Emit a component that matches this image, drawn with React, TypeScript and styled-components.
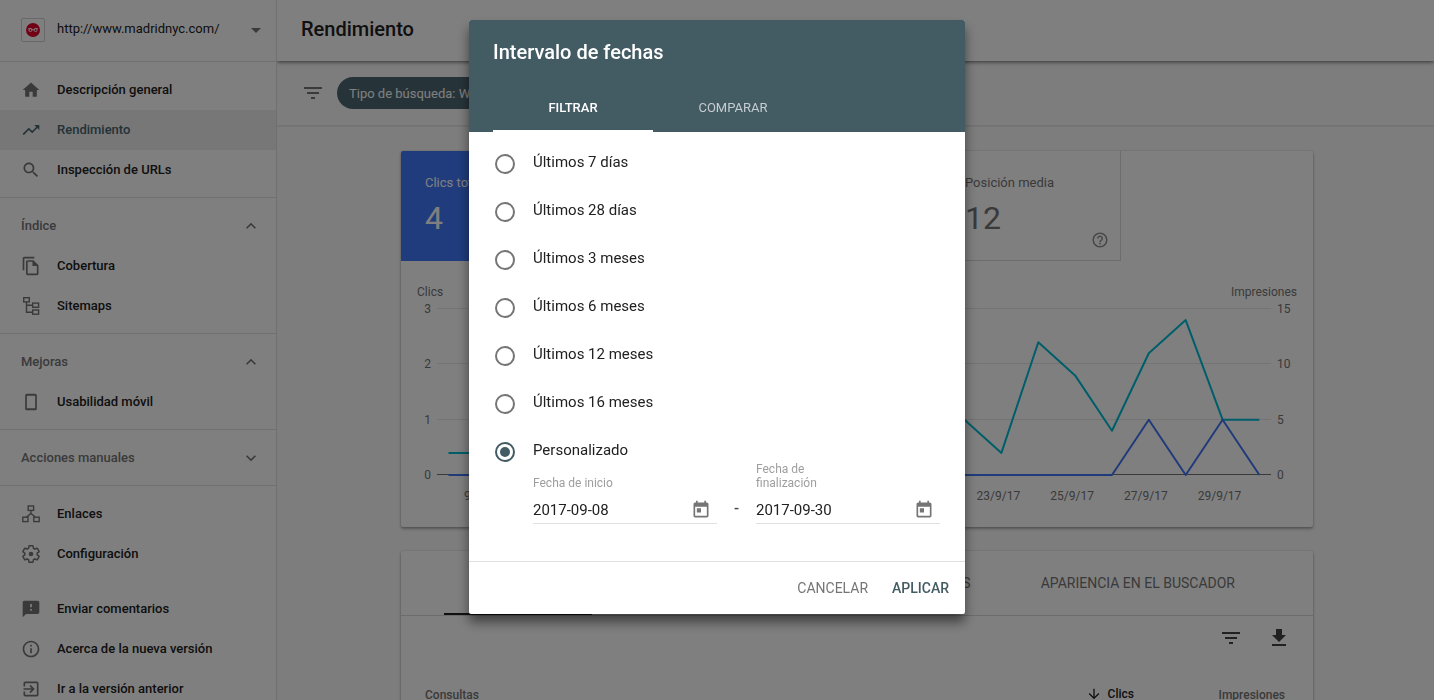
import React from "react";
import styled, { createGlobalStyle, css } from "styled-components";

const Global = createGlobalStyle`
  *, *::before, *::after { box-sizing: border-box; }
  body {
    margin: 0;
    overflow: hidden;
    background: #fafafa;
    color: #212121;
    font-family: Roboto, "Liberation Sans", sans-serif;
    font-size: 14px;
  }
  button, input { font: inherit; color: inherit; }
  button { margin: 0; padding: 0; border: 0; background: none; cursor: pointer; }
  h1, h2, p { margin: 0; font-weight: 500; }
`;

/* ---------- icons ---------- */

const Svg = styled.svg<{ $size: number }>`
  display: block;
  flex: none;
  width: ${(p) => p.$size}px;
  height: ${(p) => p.$size}px;
  fill: currentColor;
`;

const paths = {
  home: "M10 20v-6h4v6h5v-8h3L12 3 2 12h3v8z",
  trend: "M16 6l2.29 2.29-4.88 4.88-4-4L2 16.59 3.41 18l6-6 4 4 6.3-6.29L22 12V6z",
  search:
    "M15.5 14h-.79l-.28-.27C15.41 12.59 16 11.11 16 9.5 16 5.91 13.09 3 9.5 3S3 5.91 3 9.5 5.91 16 9.5 16c1.61 0 3.09-.59 4.23-1.57l.27.28v.79l5 4.99L20.49 19l-4.99-5zm-6 0C7.01 14 5 11.99 5 9.5S7.01 5 9.5 5 14 7.01 14 9.5 11.99 14 9.5 14z",
  copy: "M16 1H4c-1.1 0-2 .9-2 2v14h2V3h12V1zm-1 4H8c-1.1 0-1.99.9-1.99 2L6 21c0 1.1.89 2 1.99 2H19c1.1 0 2-.9 2-2V11l-6-6zM8 21V7h6v5h5v9H8z",
  phone:
    "M17 2H7c-1.1 0-2 .9-2 2v16c0 1.1.9 2 2 2h10c1.1 0 2-.9 2-2V4c0-1.1-.9-2-2-2zm0 17.5H7v-15h10v15z",
  feedback:
    "M20 2H4c-1.1 0-1.99.9-1.99 2L2 22l4-4h14c1.1 0 2-.9 2-2V4c0-1.1-.9-2-2-2zm-7 12h-2v-2h2v2zm0-4h-2V6h2v4z",
  info: "M11 17h2v-6h-2v6zm1-15C6.48 2 2 6.48 2 12s4.48 10 10 10 10-4.48 10-10S17.52 2 12 2zm0 18c-4.41 0-8-3.59-8-8s3.59-8 8-8 8 3.59 8 8-3.59 8-8 8zM11 9h2V7h-2v2z",
  exit: "M10.09 15.59L11.5 17l5-5-5-5-1.41 1.41L12.67 11H3v2h9.67l-2.58 2.59zM19 3H5c-1.11 0-2 .9-2 2v4h2V5h14v14H5v-4H3v4c0 1.1.89 2 2 2h14c1.1 0 2-.9 2-2V5c0-1.1-.9-2-2-2z",
  help: "M11 18h2v-2h-2v2zm1-16C6.48 2 2 6.48 2 12s4.48 10 10 10 10-4.48 10-10S17.52 2 12 2zm0 18c-4.41 0-8-3.59-8-8s3.59-8 8-8 8 3.59 8 8-3.59 8-8 8zm0-14c-2.21 0-4 1.79-4 4h2c0-1.1.9-2 2-2s2 .9 2 2c0 2-3 1.75-3 5h2c0-2.25 3-2.5 3-5 0-2.21-1.79-4-4-4z",
  arrowDown: "M20 12l-1.41-1.41L13 16.17V4h-2v12.17l-5.58-5.59L4 12l8 8 8-8z",
  filter: "M10 18h4v-2h-4v2zM3 6v2h18V6H3zm3 7h12v-2H6v2z",
  download: "M19 9h-4V3H9v6H5l7 7 7-7zM5 18v2h14v-2H5z",
  less: "M12 8l-6 6 1.41 1.41L12 10.83l4.59 4.58L18 14z",
  more: "M16.59 8.59L12 13.17 7.41 8.59 6 10l6 6 6-6z",
  drop: "M7 10l5 5 5-5z",
  today:
    "M19 3h-1V1h-2v2H8V1H6v2H5c-1.11 0-1.99.9-1.99 2L3 19c0 1.1.89 2 2 2h14c1.1 0 2-.9 2-2V5c0-1.1-.9-2-2-2zm0 16H5V8h14v11zM7 10h5v5H7z",
};

type IconName = keyof typeof paths | "sitemap" | "links" | "gear";

function Icon({ name, size = 20 }: { name: IconName; size?: number }) {
  if (name === "sitemap") {
    return (
      <Svg $size={size} viewBox="0 0 20 20" aria-hidden="true">
        <g fill="none" stroke="currentColor" strokeWidth="1.4">
          <rect x="2.7" y="1.7" width="5.6" height="4.2" />
          <rect x="11.7" y="7.1" width="5.9" height="4.2" />
          <rect x="11.7" y="14" width="5.9" height="4.2" />
          <path d="M5.5 6v10.2h6.2M5.5 9.3h6.2" />
        </g>
      </Svg>
    );
  }
  if (name === "links") {
    return (
      <Svg $size={size} viewBox="0 0 20 20" aria-hidden="true">
        <g fill="none" stroke="currentColor" strokeWidth="1.4">
          <rect x="7.2" y="2" width="5.4" height="4.4" />
          <rect x="1.8" y="13.2" width="5.2" height="4.4" />
          <rect x="12.8" y="13.2" width="5.4" height="4.4" />
          <path d="M9.9 6.4v3.4M5.4 13.2l4.5-3.8 4.6 3.8" />
        </g>
      </Svg>
    );
  }
  if (name === "gear") {
    return (
      <Svg $size={size} viewBox="0 0 24 24" aria-hidden="true">
        <path
          fill="none"
          stroke="currentColor"
          strokeWidth="1.8"
          d="M19.43 12.98c.04-.32.07-.64.07-.98s-.03-.66-.07-.98l2.11-1.65c.19-.15.24-.42.12-.64l-2-3.46c-.12-.22-.39-.3-.61-.22l-2.49 1c-.52-.4-1.08-.73-1.69-.98l-.38-2.65C14.46 2.18 14.25 2 14 2h-4c-.25 0-.46.18-.49.42l-.38 2.65c-.61.25-1.17.59-1.69.98l-2.49-1c-.23-.09-.49 0-.61.22l-2 3.46c-.13.22-.07.49.12.64l2.11 1.65c-.04.32-.07.65-.07.98s.03.66.07.98l-2.11 1.65c-.19.15-.24.42-.12.64l2 3.46c.12.22.39.3.61.22l2.49-1c.52.4 1.08.73 1.69.98l.38 2.65c.03.24.24.42.49.42h4c.25 0 .46-.18.49-.42l.38-2.65c.61-.25 1.17-.59 1.69-.98l2.49 1c.23.09.49 0 .61-.22l2-3.46c.12-.22.07-.49-.12-.64l-2.11-1.65z"
        />
        <circle cx="12" cy="12" r="2.8" />
      </Svg>
    );
  }
  return (
    <Svg $size={size} viewBox="0 0 24 24" aria-hidden="true">
      <path d={paths[name]} />
      {name === "copy" && <path d="M14 6v6h6z" />}
    </Svg>
  );
}

/* ---------- page shell ---------- */

const Page = styled.div`
  display: grid;
  grid-template-columns: 277px minmax(0, 1fr);
  height: 100vh;
  overflow: hidden;
`;

const Sidebar = styled.aside`
  border-right: 1px solid #e0e0e0;
  background: #fff;
  overflow: hidden;
`;

const Property = styled.button`
  display: flex;
  align-items: center;
  width: 100%;
  height: 62px;
  padding: 0 8px 2px 21px;
  border-bottom: 1px solid #e0e0e0;
  font-size: 13px;
  text-align: left;
  color: #212121;
`;

const Favicon = styled.span`
  display: grid;
  place-items: center;
  width: 24px;
  height: 24px;
  margin-right: 12px;
  border: 1px solid #d0d0d0;
  border-radius: 2px;
`;

const PropertyName = styled.span`
  flex: 1;
  padding-bottom: 2px;
`;

const Muted = styled.span`
  display: flex;
  color: #757575;
`;

const NavSection = styled.div<{ $line?: boolean }>`
  padding: 8px 0 7px;
  ${(p) => p.$line && css`border-bottom: 1px solid #e0e0e0;`}
`;

const NavLink = styled.a<{ $active?: boolean }>`
  display: flex;
  align-items: center;
  gap: 16px;
  height: 40px;
  padding-left: 21px;
  font-size: 13px;
  font-weight: 500;
  text-decoration: none;
  color: ${(p) => (p.$active ? "#47646f" : "#212121")};
  background: ${(p) => (p.$active ? "#eeeeee" : "transparent")};
  svg { color: ${(p) => (p.$active ? "#47646f" : "#757575")}; }
`;

const NavText = styled.span`
  padding-bottom: 2px;
`;

const GroupButton = styled.button`
  display: flex;
  align-items: center;
  justify-content: space-between;
  width: 100%;
  height: 40px;
  padding: 0 15px 0 21px;
  font-size: 13px;
  font-weight: 500;
  color: #757575;
`;

const Main = styled.main`
  display: flex;
  flex-direction: column;
  min-width: 0;
  overflow: hidden;
`;

const TopBar = styled.header`
  display: flex;
  flex: none;
  align-items: center;
  height: 61px;
  padding: 0 24px 4px;
  background: #fff;
  box-shadow: 0 1px 4px rgba(0, 0, 0, 0.6);
  z-index: 1;
`;

const PageTitle = styled.h1`
  font-size: 20px;
  line-height: 28px;
`;

const FilterBar = styled.div`
  display: flex;
  flex: none;
  align-items: center;
  gap: 12px;
  height: 66px;
  padding: 0 24px;
  border-bottom: 2px solid #e8e8e8;
`;

const IconButton = styled.button`
  display: flex;
  color: #757575;
`;

const Chip = styled.button`
  height: 32px;
  padding: 0 12px;
  border-radius: 16px;
  background: #4d6873;
  color: #fff;
  font-size: 13px;
`;

const Content = styled.div`
  display: flex;
  flex: none;
  flex-direction: column;
  gap: 24px;
  padding: 24px 121px 24px 124px;
`;

const Card = styled.section`
  border-radius: 2px;
  background: #fff;
  box-shadow: 0 2px 3px rgba(0, 0, 0, 0.3), 0 0 2px rgba(0, 0, 0, 0.2);
  overflow: hidden;
`;

/* ---------- score cards ---------- */

const Scores = styled.div`
  display: grid;
  grid-template-columns: repeat(4, 180px);
`;

const Score = styled.div<{ $fill?: string }>`
  display: flex;
  flex-direction: column;
  height: 110px;
  padding: 22px 11px 0 24px;
  background: ${(p) => p.$fill ?? "transparent"};
  color: ${(p) => (p.$fill ? "#fff" : "#757575")};
  ${(p) =>
    !p.$fill &&
    css`
      border-right: 1px solid #d8d8d8;
      border-bottom: 1px solid #d8d8d8;
    `}
`;

const ScoreLabel = styled.span`
  font-size: 13px;
  line-height: 20px;
`;

const ScoreValue = styled.span`
  margin-top: 5px;
  font-size: 32px;
  line-height: 40px;
`;

const ScoreHelp = styled.button`
  display: flex;
  align-self: flex-end;
  margin-top: -7px;
  opacity: 0.8;
`;

/* ---------- chart ---------- */

const ChartSvg = styled.svg`
  display: block;
  width: 100%;
  height: auto;
  font-size: 12px;
  fill: #757575;
`;

const impressions = [2, 2, 4, 3, 5, 4, 6, 3, 5, 7, 4, 6, 8, 4, 5, 2, 12, 9, 4, 11, 14, 5, 5];
const clicks = [0, 0, 0, 0, 0, 0, 0, 0, 0, 0, 0, 0, 0, 0, 0, 0, 0, 0, 0, 1, 0, 1, 0];
const BASE = 214;
const HEIGHT = 166;
const px = (i: number) => 47.5 + i * 36.86;
const line = (values: number[], max: number) =>
  values.map((v, i) => `${px(i).toFixed(1)},${(BASE - (v / max) * HEIGHT).toFixed(1)}`).join(" ");

function Chart() {
  return (
    <ChartSvg viewBox="0 0 912 266" role="img" aria-label="Clics e impresiones por día">
      <text x="16" y="35">Clics</text>
      <text x="896" y="35" textAnchor="end">Impresiones</text>
      {[0, 1, 2, 3].map((v) => {
        const y = Math.round(BASE - (v / 3) * HEIGHT) - 0.5;
        return (
          <g key={v}>
            <path d={`M36 ${y}H870`} stroke={v === 0 ? "#757575" : "#e8e8e8"} />
            <text x="30" y={y + 4} textAnchor="end">{v}</text>
            <text x="876" y={y + 4}>{v * 5}</text>
          </g>
        );
      })}
      {impressions.map((_, i) =>
        i % 2 === 1 ? (
          <text key={i} x={px(i) - 3} y="239" textAnchor="middle">{`${8 + i}/9/17`}</text>
        ) : null
      )}
      <g fill="none" strokeWidth="2" strokeLinejoin="round">
        <polyline points={line(impressions, 15)} stroke="#00bcd4" />
        <polyline points={line(clicks, 3)} stroke="#4274f4" />
      </g>
    </ChartSvg>
  );
}

/* ---------- table card ---------- */

const DataTabs = styled.div`
  display: flex;
  justify-content: flex-end;
  gap: 16px;
  height: 65px;
  padding: 0 54px 0 43px;
  border-bottom: 1px solid #d8d8d8;
`;

const DataTab = styled.button<{ $active?: boolean }>`
  padding: 2px 24px 0;
  font-size: 14px;
  white-space: nowrap;
  color: ${(p) => (p.$active ? "#212121" : "#757575")};
  border-bottom: 2px solid ${(p) => (p.$active ? "#212121" : "transparent")};
  &:first-child {
    min-width: 148px;
    margin-right: auto;
  }
  &:last-child { margin-left: 6px; }
`;

const Toolbar = styled.div`
  display: flex;
  justify-content: flex-end;
  gap: 24px;
  padding: 10px 22px;
  ${IconButton} { color: #424242; }
`;

const DataTable = styled.table`
  width: 100%;
  border-collapse: collapse;
  font-size: 12px;
  th {
    height: 70px;
    padding: 0;
    font-weight: 500;
    text-align: right;
    color: #757575;
  }
  th:first-child { padding-left: 24px; text-align: left; }
  th:last-child { width: 179px; padding-right: 28px; }
`;

const SortHead = styled.button`
  display: inline-flex;
  align-items: center;
  gap: 6px;
  font-weight: 500;
  color: #212121;
`;

/* ---------- dialog ---------- */

const Scrim = styled.div`
  position: fixed;
  inset: 0;
  z-index: 10;
  display: flex;
  justify-content: center;
  align-items: flex-start;
  padding: 20px;
  background: rgba(0, 0, 0, 0.5);
`;

const Dialog = styled.form`
  width: 496px;
  border-radius: 2px;
  background: #fff;
  overflow: hidden;
  box-shadow: 0 8px 12px rgba(0, 0, 0, 0.5);
`;

const DialogHead = styled.div`
  height: 112px;
  padding: 16px 24px 0;
  background: #435b63;
  color: #fff;
`;

const DialogTitle = styled.h2`
  font-size: 20px;
  line-height: 32px;
`;

const DialogTabs = styled.div`
  display: flex;
  margin-top: 16px;
`;

const DialogTab = styled.button<{ $active?: boolean }>`
  width: 160px;
  height: 48px;
  border-bottom: 2px solid ${(p) => (p.$active ? "#fff" : "transparent")};
  font-size: 13px;
  font-weight: ${(p) => (p.$active ? 500 : 400)};
  color: ${(p) => (p.$active ? "#fff" : "#c7cdd1")};
`;

const DialogBody = styled.div`
  padding: 6px 25px 37px 26px;
`;

const Option = styled.label`
  display: flex;
  gap: 18px;
  height: 48px;
  font-size: 15px;
  line-height: 48px;
`;

const Radio = styled.input`
  appearance: none;
  flex: none;
  display: grid;
  place-items: center;
  width: 20px;
  height: 20px;
  margin: 16px 0 0;
  border: 2px solid #757575;
  border-radius: 50%;
  &:checked { border-color: #435b63; }
  &:checked::before {
    content: "";
    width: 10px;
    height: 10px;
    border-radius: 50%;
    background: #435b63;
  }
`;

const Dates = styled.div`
  display: flex;
  align-items: flex-end;
  justify-content: space-between;
  margin: -12px 0 0 38px;
`;

const DateField = styled.label`
  width: 184px;
  font-size: 12px;
  line-height: 14px;
  color: #9e9e9e;
`;

const DateCaption = styled.span`
  display: block;
  max-width: 90px;
`;

const DateLine = styled.span`
  display: flex;
  align-items: center;
  margin-top: 6px;
  padding-right: 6px;
  border-bottom: 1px solid #e0e0e0;
  color: #757575;
`;

const DateInput = styled.input`
  flex: 1;
  min-width: 0;
  height: 27px;
  padding: 0;
  border: 0;
  outline: 0;
  background: none;
  font-size: 15px;
  color: #212121;
`;

const Dash = styled.span`
  font-size: 15px;
  font-weight: 500;
  line-height: 32px;
  color: #424242;
`;

const DialogFoot = styled.div`
  display: flex;
  align-items: center;
  justify-content: flex-end;
  gap: 24px;
  height: 53px;
  padding-right: 16px;
  border-top: 1px solid #e0e0e0;
`;

const TextButton = styled.button<{ $primary?: boolean }>`
  font-size: 14px;
  font-weight: ${(p) => (p.$primary ? 500 : 400)};
  color: ${(p) => (p.$primary ? "#435b63" : "#757575")};
`;

const options = [
  "Últimos 7 días",
  "Últimos 28 días",
  "Últimos 3 meses",
  "Últimos 6 meses",
  "Últimos 12 meses",
  "Últimos 16 meses",
  "Personalizado",
];

const scores = [
  { label: "Clics totales", value: "4", fill: "#4279fb" },
  { label: "Impresiones totales", value: "125", fill: "#00bcd4" },
  { label: "CTR medio", value: "3,2%" },
  { label: "Posición media", value: "12" },
];

function NavItem({ icon, text, active }: { icon: IconName; text: string; active?: boolean }) {
  return (
    <NavLink href="#" $active={active}>
      <Icon name={icon} />
      <NavText>{text}</NavText>
    </NavLink>
  );
}

function Group({ text, open }: { text: string; open?: boolean }) {
  return (
    <GroupButton type="button" aria-expanded={!!open}>
      <NavText>{text}</NavText>
      <Icon name={open ? "less" : "more"} />
    </GroupButton>
  );
}

function DateBox({ caption, value }: { caption: string; value: string }) {
  return (
    <DateField>
      <DateCaption>{caption}</DateCaption>
      <DateLine>
        <DateInput type="text" defaultValue={value} />
        <Icon name="today" />
      </DateLine>
    </DateField>
  );
}

export default function App() {
  return (
    <>
      <Global />
      <Page>
        <Sidebar>
          <Property type="button">
            <Favicon>
              <Svg $size={14} viewBox="0 0 14 14" aria-hidden="true">
                <circle cx="7" cy="7" r="7" fill="#e4002b" />
                <g fill="none" stroke="#fff" strokeWidth="0.9">
                  <circle cx="4.4" cy="7.1" r="1.5" />
                  <circle cx="9.6" cy="7.1" r="1.5" />
                  <path d="M2.2 5.6h2.6L7 7l2.2-1.4h2.6" />
                </g>
              </Svg>
            </Favicon>
            <PropertyName>http://www.madridnyc.com/</PropertyName>
            <Muted><Icon name="drop" size={24} /></Muted>
          </Property>
          <nav>
            <NavSection $line>
              <NavItem icon="home" text="Descripción general" />
              <NavItem icon="trend" text="Rendimiento" active />
              <NavItem icon="search" text="Inspección de URLs" />
            </NavSection>
            <NavSection $line>
              <Group text="Índice" open />
              <NavItem icon="copy" text="Cobertura" />
              <NavItem icon="sitemap" text="Sitemaps" />
            </NavSection>
            <NavSection $line>
              <Group text="Mejoras" open />
              <NavItem icon="phone" text="Usabilidad móvil" />
            </NavSection>
            <NavSection $line>
              <Group text="Acciones manuales" />
            </NavSection>
            <NavSection>
              <NavItem icon="links" text="Enlaces" />
              <NavItem icon="gear" text="Configuración" />
            </NavSection>
            <NavSection>
              <NavItem icon="feedback" text="Enviar comentarios" />
              <NavItem icon="info" text="Acerca de la nueva versión" />
              <NavItem icon="exit" text="Ir a la versión anterior" />
            </NavSection>
          </nav>
        </Sidebar>

        <Main>
          <TopBar>
            <PageTitle>Rendimiento</PageTitle>
          </TopBar>
          <FilterBar>
            <IconButton type="button" aria-label="Filtros"><Icon name="filter" size={24} /></IconButton>
            <Chip type="button">Tipo de búsqueda: Web</Chip>
          </FilterBar>
          <Content>
            <Card>
              <Scores>
                {scores.map((s) => (
                  <Score key={s.label} $fill={s.fill}>
                    <ScoreLabel>{s.label}</ScoreLabel>
                    <ScoreValue>{s.value}</ScoreValue>
                    <ScoreHelp type="button" aria-label="Ayuda"><Icon name="help" size={18} /></ScoreHelp>
                  </Score>
                ))}
              </Scores>
              <Chart />
            </Card>
            <Card>
              <DataTabs role="tablist">
                <DataTab type="button" role="tab" $active>CONSULTAS</DataTab>
                <DataTab type="button" role="tab">PÁGINAS</DataTab>
                <DataTab type="button" role="tab">PAÍSES</DataTab>
                <DataTab type="button" role="tab">DISPOSITIVOS</DataTab>
                <DataTab type="button" role="tab">APARIENCIA EN EL BUSCADOR</DataTab>
              </DataTabs>
              <Toolbar>
                <IconButton type="button" aria-label="Filtrar"><Icon name="filter" size={24} /></IconButton>
                <IconButton type="button" aria-label="Descargar"><Icon name="download" size={24} /></IconButton>
              </Toolbar>
              <DataTable>
                <thead>
                  <tr>
                    <th scope="col">Consultas</th>
                    <th scope="col"><SortHead type="button"><Icon name="arrowDown" size={16} />Clics</SortHead></th>
                    <th scope="col">Impresiones</th>
                  </tr>
                </thead>
              </DataTable>
            </Card>
          </Content>
        </Main>
      </Page>

      <Scrim>
        <Dialog role="dialog" aria-modal="true" aria-labelledby="range-title" onSubmit={(e) => e.preventDefault()}>
          <DialogHead>
            <DialogTitle id="range-title">Intervalo de fechas</DialogTitle>
            <DialogTabs role="tablist">
              <DialogTab type="button" role="tab" aria-selected $active>FILTRAR</DialogTab>
              <DialogTab type="button" role="tab" aria-selected={false}>COMPARAR</DialogTab>
            </DialogTabs>
          </DialogHead>
          <DialogBody>
            {options.map((o) => (
              <Option key={o}>
                <Radio type="radio" name="range" defaultChecked={o === "Personalizado"} />
                {o}
              </Option>
            ))}
            <Dates>
              <DateBox caption="Fecha de inicio" value="2017-09-08" />
              <Dash>-</Dash>
              <DateBox caption="Fecha de finalización" value="2017-09-30" />
            </Dates>
          </DialogBody>
          <DialogFoot>
            <TextButton type="button">CANCELAR</TextButton>
            <TextButton type="submit" $primary>APLICAR</TextButton>
          </DialogFoot>
        </Dialog>
      </Scrim>
    </>
  );
}
